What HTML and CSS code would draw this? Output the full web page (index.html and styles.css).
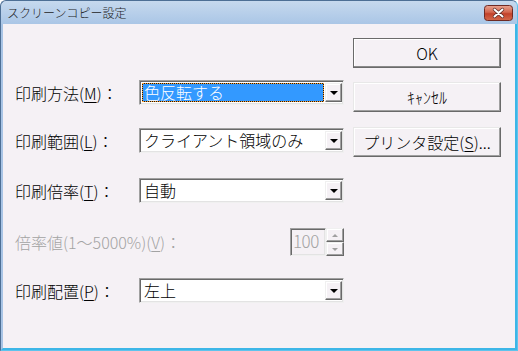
FILE: index.html
```html
<!DOCTYPE html>
<html lang="ja">
<head>
<meta charset="utf-8">
<title>スクリーンコピー設定</title>
<link rel="stylesheet" href="styles.css">
</head>
<body>
<div class="window">
  <div class="titlebar">
    <span class="title">スクリーンコピー設定</span>
    <span class="close">
      <svg width="29" height="16" viewBox="0 0 29 16">
        <defs>
          <linearGradient id="cg" x1="0" y1="0" x2="0" y2="1">
            <stop offset="0" stop-color="#e9a592"/>
            <stop offset="0.45" stop-color="#d3664e"/>
            <stop offset="0.55" stop-color="#c2412a"/>
            <stop offset="1" stop-color="#d46a4c"/>
          </linearGradient>
        </defs>
        <rect x="0.5" y="0.5" width="28" height="15" rx="3" fill="url(#cg)" stroke="#6e2a24"/>
        <path d="M10.5 4.5 L18.5 11.5 M18.5 4.5 L10.5 11.5" stroke="#5a2a26" stroke-width="3.4" stroke-linecap="round"/>
        <path d="M10.5 4.5 L18.5 11.5 M18.5 4.5 L10.5 11.5" stroke="#ffffff" stroke-width="2" stroke-linecap="round"/>
      </svg>
    </span>
  </div>
  <div class="client">
    <div class="form">
      <div class="row">
        <span class="lbl">印刷方法(<u>M</u>)：</span>
        <div class="combo">
          <span class="val sel">色反転する</span>
          <span class="drop"><i class="tri"></i></span>
        </div>
      </div>
      <div class="row r2">
        <span class="lbl">印刷範囲(<u>L</u>)：</span>
        <div class="combo">
          <span class="val">クライアント領域のみ</span>
          <span class="drop"><i class="tri"></i></span>
        </div>
      </div>
      <div class="row r3">
        <span class="lbl">印刷倍率(<u>T</u>)：</span>
        <div class="combo">
          <span class="val">自動</span>
          <span class="drop"><i class="tri"></i></span>
        </div>
      </div>
      <div class="row r4 spread">
        <span class="lbl dis">倍率値(1～5000%)(<u>V</u>)：</span>
        <div class="spin">
          <span class="spinval">100</span>
          <span class="spinbtns">
            <span class="sbtn"><i class="stri up"></i></span>
            <span class="sbtn"><i class="stri down"></i></span>
          </span>
        </div>
      </div>
      <div class="row r5">
        <span class="lbl">印刷配置(<u>P</u>)：</span>
        <div class="combo">
          <span class="val">左上</span>
          <span class="drop"><i class="tri"></i></span>
        </div>
      </div>
    </div>
    <div class="buttons">
      <div class="btn default">OK</div>
      <div class="btn">ｷｬﾝｾﾙ</div>
      <div class="btn">プリンタ設定(<u>S</u>)...</div>
    </div>
  </div>
</div>
</body>
</html>
```
FILE: styles.css
```css
body {
  margin: 0;
  font-family: "Noto Sans CJK JP", "Noto Sans", sans-serif;
  font-weight: 300;
}

.window {
  width: 518px;
  height: 351px;
  box-sizing: border-box;
  border: 1px solid #4d6f95;
  border-right-color: #5ec3ec;
  border-bottom-color: #5ec3ec;
  border-radius: 6px 6px 0 0;
  background: linear-gradient(to bottom, #c6d9ee 0, #aac6e6 23px, #a9c5e5 100%);
  display: flex;
  flex-direction: column;
  overflow: hidden;
}

.titlebar {
  height: 23px;
  flex: none;
  display: flex;
  align-items: center;
  justify-content: space-between;
  padding: 0 4px 0 6px;
}

.title {
  font-size: 12px;
  line-height: 16px;
  color: #1c1c1c;
}

.close {
  display: flex;
  margin-top: 1px;
}

.client {
  flex: 1;
  background: #f5f1f5;
  border-left: 2px solid #a8c4e5;
  border-right: 2px solid #3db6e7;
  border-bottom: 2px solid #3db6e7;
  display: flex;
  padding-left: 12px;
}

.form {
  width: 329px;
  padding-top: 56px;
  display: flex;
  flex-direction: column;
}

.row {
  height: 25px;
  display: flex;
  align-items: center;
}

.r2 { margin-top: 23px; }
.r3 { margin-top: 25px; }
.r4 { margin-top: 25px; height: 28px; }
.r5 { margin-top: 22px; }

.spread {
  justify-content: space-between;
}

.lbl {
  width: 124px;
  flex: none;
  font-size: 16px;
  line-height: 20px;
  white-space: nowrap;
  color: #000;
}

.spread .lbl {
  width: auto;
}

.lbl u, .btn u {
  text-underline-offset: 2px;
  text-decoration-thickness: 1px;
}

.dis {
  color: #a3a3a3;
}

.combo {
  width: 205px;
  height: 25px;
  box-sizing: border-box;
  border: 1px solid;
  border-color: #a0a0a0 #f0f0f0 #f0f0f0 #a0a0a0;
  box-shadow: inset 1px 1px #696969, inset -1px -1px #e3e3e3;
  background: #fff;
  display: flex;
  align-items: stretch;
  padding: 2px 1px 2px 2px;
}

.val {
  flex: 1;
  font-size: 16px;
  line-height: 19px;
  padding-left: 2px;
  white-space: nowrap;
  color: #000;
}

.val.sel {
  color: #fff;
  border: 1px dotted #ffa030;
  background: linear-gradient(#3399ff, #3399ff) padding-box, #1a1a1a border-box;
  padding-left: 1px;
  margin-right: 1px;
  line-height: 17px;
}

.drop {
  width: 17px;
  flex: none;
  box-sizing: border-box;
  background: #f5f1f5;
  border: 1px solid;
  border-color: #f0f0f0 #696969 #696969 #f0f0f0;
  box-shadow: inset -1px -1px #a0a0a0, inset 1px 1px #fff;
  display: flex;
  align-items: center;
  justify-content: center;
}

.tri {
  width: 0;
  height: 0;
  border-left: 4px solid transparent;
  border-right: 4px solid transparent;
  border-top: 4px solid #000;
  margin-top: 1px;
}

.spin {
  width: 54px;
  height: 28px;
  display: flex;
}

.spinval {
  width: 36px;
  box-sizing: border-box;
  border: 1px solid;
  border-color: #a0a0a0 #f0f0f0 #f0f0f0 #a0a0a0;
  box-shadow: inset 1px 1px #696969, inset -1px -1px #e3e3e3;
  background: #f5f1f5;
  color: #a3a3a3;
  font-size: 17px;
  line-height: 24px;
  padding-left: 2px;
  letter-spacing: -0.5px;
}

.spinbtns {
  width: 18px;
  display: flex;
  flex-direction: column;
}

.sbtn {
  flex: 1;
  box-sizing: border-box;
  background: #f5f1f5;
  border: 1px solid;
  border-color: #f0f0f0 #696969 #696969 #f0f0f0;
  box-shadow: inset -1px -1px #a0a0a0, inset 1px 1px #fff;
  display: flex;
  align-items: center;
  justify-content: center;
}

.stri {
  width: 0;
  height: 0;
  border-left: 3px solid transparent;
  border-right: 3px solid transparent;
}

.stri.up { border-bottom: 3px solid #a0a0a0; }
.stri.down { border-top: 3px solid #a0a0a0; }

.buttons {
  margin-left: 9px;
  padding-top: 14px;
  width: 148px;
  display: flex;
  flex-direction: column;
}

.btn {
  height: 30px;
  box-sizing: border-box;
  border: 1px solid;
  border-color: #e8e8e8 #696969 #696969 #e8e8e8;
  box-shadow: inset -1px -1px #a0a0a0, inset 1px 1px #fff;
  background: #f5f1f5;
  font-size: 16px;
  line-height: 20px;
  display: flex;
  align-items: center;
  justify-content: center;
  white-space: nowrap;
  color: #000;
}

.btn + .btn { margin-top: 14px; }
.btn + .btn + .btn { margin-top: 15px; }

.btn.default {
  border-color: #6a6a6a;
  box-shadow: inset -1px -1px #8a8a8a, inset 1px 1px #fff;
}
```
